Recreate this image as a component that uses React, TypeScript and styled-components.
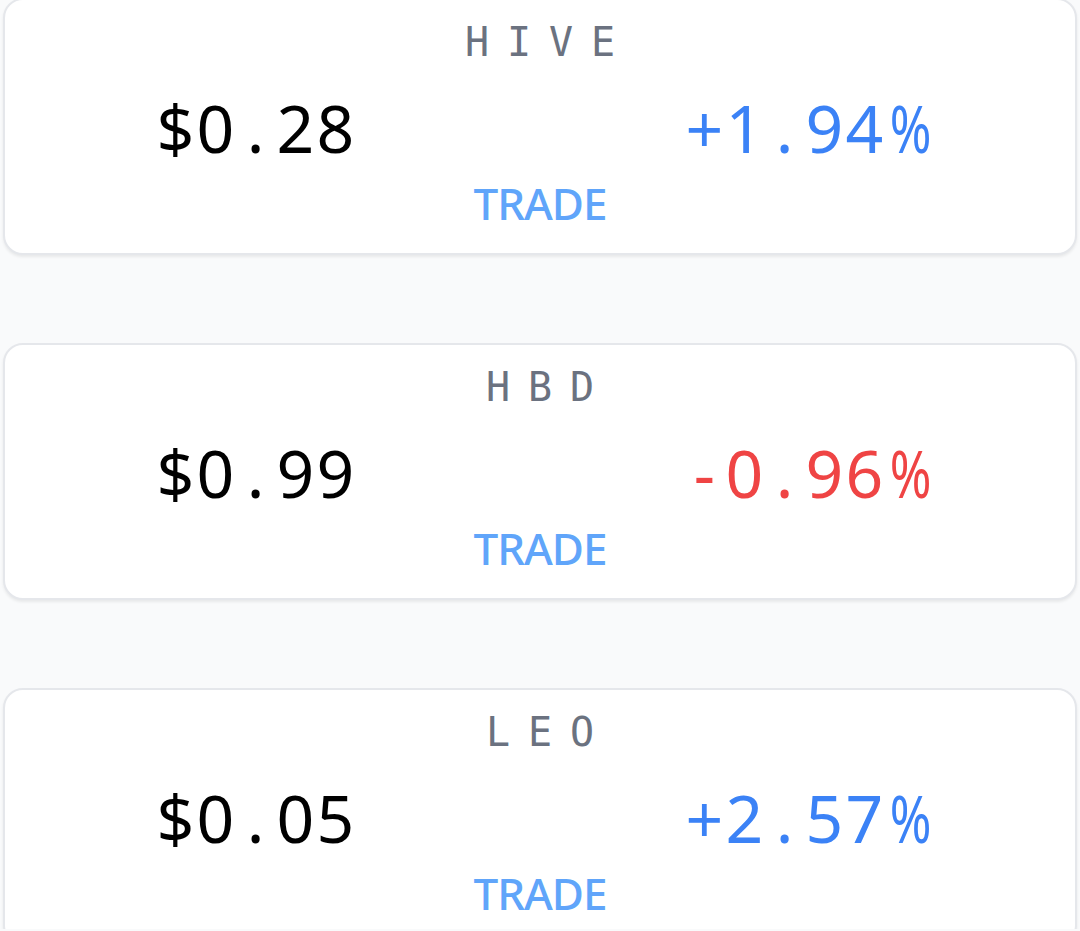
import React from 'react'
import styled, { createGlobalStyle } from 'styled-components'

const GlobalStyle = createGlobalStyle`
  html, body {
    margin: 0;
    padding: 0;
    background: #f9fafb;
    font-family: "Noto Sans", "Open Sans", sans-serif;
    overflow: hidden;
  }
`

const Page = styled.div`
  display: flex;
  flex-direction: column;
  gap: 88px;
  padding: 0 3px;
  margin-top: -2px;
  height: 931px;
  box-sizing: border-box;
`

const Card = styled.div`
  flex: 0 0 auto;
  height: 257px;
  box-sizing: border-box;
  background: #ffffff;
  border: 2px solid #e5e7eb;
  border-radius: 20px;
  box-shadow: 0 2px 3px rgba(0, 0, 0, 0.07);
  display: flex;
  flex-direction: column;
  align-items: center;
  padding-top: 18px;
`

const Title = styled.div`
  display: flex;
  justify-content: center;
  font-family: "DejaVu Sans Mono", monospace;
  font-size: 40px;
  line-height: 49px;
  color: #6b7280;
`

const Row = styled.div`
  align-self: stretch;
  display: grid;
  grid-template-columns: 1fr 1fr;
  margin-top: 20px;
`

const Value = styled.div<{ $tone: 'plain' | 'up' | 'down'; $side: 'left' | 'right' }>`
  display: flex;
  justify-content: center;
  font-size: 66px;
  line-height: 80px;
  padding-right: ${p => (p.$side === 'left' ? '34px' : '6px')};
  color: ${p => (p.$tone === 'up' ? '#3b82f6' : p.$tone === 'down' ? '#ef4444' : '#000000')};
`

// every glyph sits in a fixed cell so the figures line up like a mono face
const Cell = styled.span<{ $w: number; $squeeze?: boolean }>`
  display: inline-block;
  width: ${p => p.$w}px;
  text-align: center;
  transform: ${p => (p.$squeeze ? 'scaleX(0.76)' : 'none')};
`

const Trade = styled.a`
  margin-top: 10px;
  font-size: 44px;
  line-height: 52px;
  font-weight: 500;
  letter-spacing: -1px;
  color: #60a5fa;
  text-decoration: none;
  cursor: pointer;
`

function Mono({ text, w }: { text: string; w: number }) {
  return (
    <>
      {text.split('').map((c, i) => (
        <Cell key={i} $w={w} $squeeze={c === '%'}>
          {c}
        </Cell>
      ))}
    </>
  )
}

const coins = [
  { sym: 'HIVE', price: '$0.28', change: '+1.94%' },
  { sym: 'HBD', price: '$0.99', change: '-0.96%' },
  { sym: 'LEO', price: '$0.05', change: '+2.57%' }
]

export default function App() {
  return (
    <>
      <GlobalStyle />
      <Page>
        {coins.map(coin => (
          <Card key={coin.sym}>
            <Title>
              <Mono text={coin.sym} w={42} />
            </Title>
            <Row>
              <Value $tone="plain" $side="left">
                <Mono text={coin.price} w={40} />
              </Value>
              <Value $tone={coin.change.startsWith('-') ? 'down' : 'up'} $side="right">
                <Mono text={coin.change} w={40} />
              </Value>
            </Row>
            <Trade>TRADE</Trade>
          </Card>
        ))}
      </Page>
    </>
  )
}
